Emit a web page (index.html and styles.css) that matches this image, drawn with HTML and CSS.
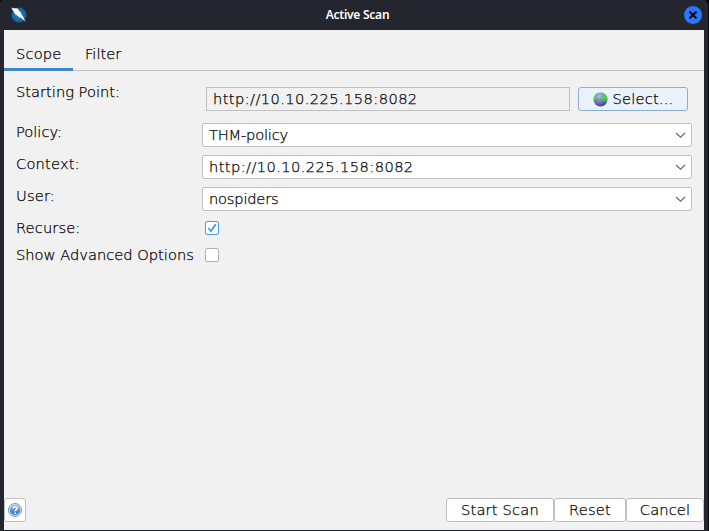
FILE: index.html
```html
<!DOCTYPE html>
<html lang="en">
<head>
<meta charset="utf-8">
<title>Active Scan</title>
<link rel="stylesheet" href="styles.css">
</head>
<body>
<div class="window">
  <header class="titlebar">
    <svg class="app-icon" width="16" height="16" viewBox="0 0 16 16">
      <defs><radialGradient id="zap"><stop offset="0" stop-color="#2f86cf"/><stop offset="1" stop-color="#125a9f"/></radialGradient></defs>
      <circle cx="8" cy="8" r="7.6" fill="url(#zap)"/>
      <path d="M0 .8L6.800 1.200 9 4.500 9.800 4.600 11.200 8.300 12 8.800 14.800 15 9.500 10.800 8.800 11 5.500 8.200 4.700 8.400Z" fill="#fff" stroke="#17212e" stroke-width=".4"/>
    </svg>
    <h1 class="title">Active Scan</h1>
    <svg class="close" width="18" height="18" viewBox="0 0 18 18">
      <circle cx="9" cy="9" r="9" fill="#2777ff"/>
      <path d="M5.500 5.500l7 7m0-7l-7 7" stroke="#0c1018" stroke-width="2.200"/>
    </svg>
  </header>
  <main class="content">
    <nav class="tabs">
      <div class="tab active"><span class="t-wide">Scope</span></div>
      <div class="tab"><span>Filter</span></div>
    </nav>
    <form class="form">
      <div class="row start">
        <label class="label"><span>Starting Point:</span></label>
        <div class="field"><span class="t-url">http://10.10.225.158:8082</span></div>
        <button type="button" class="btn select">
          <svg width="15" height="15" viewBox="0 0 15 15">
            <defs><radialGradient id="sea" cx=".4" cy=".25" r=".8"><stop offset="0" stop-color="#b4b4f2"/><stop offset=".6" stop-color="#7070c8"/><stop offset="1" stop-color="#38387c"/></radialGradient>
            <linearGradient id="land" x2="0" y2="1"><stop offset="0" stop-color="#5cb655"/><stop offset=".5" stop-color="#53d548"/><stop offset="1" stop-color="#36a23d"/></linearGradient></defs>
            <circle cx="7.500" cy="7.500" r="7" fill="url(#sea)"/>
            <path d="M.6 6C1.300 3.500 3 1.500 5.500.8L4.500 3 3 4.500 3 6.200 5.500 7.500 4.500 9 3.800 10.500 1.500 8ZM8 .6C11 .8 14 3.500 14.400 7L13.500 9.500 12 10.500 10.500 7.800 7.500 7.500 6.800 6.200 9.500 4 10 2Z" fill="url(#land)"/>
          </svg>
          <span class="t-wide">Select...</span>
        </button>
      </div>
      <div class="row">
        <label class="label"><span>Policy:</span></label>
        <div class="combo"><span class="t-tight">THM-policy</span><svg width="11" height="7" viewBox="0 0 11 7"><path d="M1 1l4.500 4.200L10 1"/></svg></div>
      </div>
      <div class="row">
        <label class="label"><span class="t-wide">Context:</span></label>
        <div class="combo"><span class="t-url">http://10.10.225.158:8082</span><svg width="11" height="7" viewBox="0 0 11 7"><path d="M1 1l4.500 4.200L10 1"/></svg></div>
      </div>
      <div class="row">
        <label class="label"><span class="t-wide">User:</span></label>
        <div class="combo"><span class="t-tight">nospiders</span><svg width="11" height="7" viewBox="0 0 11 7"><path d="M1 1l4.500 4.200L10 1"/></svg></div>
      </div>
      <div class="row check">
        <label class="label"><span class="t-recurse">Recurse:</span></label>
        <div class="box checked"><svg width="12" height="12" viewBox="0 0 12 12"><path d="M2.300 6L5 9.300l4.800-7.200"/></svg></div>
      </div>
      <div class="row check">
        <label class="label"><span>Show Advanced Options</span></label>
        <div class="box"></div>
      </div>
    </form>
    <footer class="footer">
      <button type="button" class="btn help">
        <svg width="14" height="14" viewBox="0 0 14 14">
          <defs><linearGradient id="hb" x2="0" y2="1"><stop offset="0" stop-color="#8fb4df"/><stop offset="1" stop-color="#356fb1"/></linearGradient></defs>
          <circle cx="7" cy="7" r="6.500" fill="#d3e2f3" stroke="#6e9acb"/>
          <circle cx="7" cy="7" r="5.100" fill="url(#hb)"/>
          <path d="M5 5.500C5 3.200 9 3.200 9 5.400 9 6.800 7.200 6.700 7.200 8.300M7.200 9.400v1.500" fill="none" stroke="#fff" stroke-width="1.600"/>
        </svg>
      </button>
      <button type="button" class="btn scan"><span class="t-wide">Start Scan</span></button>
      <button type="button" class="btn reset"><span class="t-wide">Reset</span></button>
      <button type="button" class="btn cancel"><span class="t-recurse">Cancel</span></button>
    </footer>
  </main>
</div>
</body>
</html>
```
FILE: styles.css
```css
* { box-sizing: border-box; }
body { margin: 0; background: #000; font: 200 14.67px/18px "DejaVu Sans", sans-serif; color: #000; overflow: hidden; }
span { white-space: nowrap; -webkit-text-stroke: .25px #000; }
svg { display: block; flex: none; }
.window { width: 709px; height: 531px; padding: 0 4px 1px; background: #23262f; border-right: 1px solid #07080a; border-radius: 3px 5px 0 0; display: flex; flex-direction: column; }
.titlebar { height: 30px; display: flex; align-items: center; justify-content: space-between; padding: 0 2px 0 7px; flex: none; }
.title { margin: 0; padding-left: 4px; font: 600 12px/16px "Noto Sans", sans-serif; letter-spacing: -.25px; color: #fff; }
.content { flex: 1; background: #f1f1f1; display: flex; flex-direction: column; }
.tabs { height: 41px; display: flex; border-bottom: 1px solid #c0c0c0; flex: none; }
.tab { height: 41px; padding: 15px 12px 0 12px; }
.tab.active { width: 69px; border-bottom: 3px solid #3e85cb; }
.form { padding: 16px 12px 0; display: flex; flex-direction: column; flex: 1; }
.row { display: flex; height: 32px; }
.row.start { height: 36px; }
.row.check { height: 27px; }
.label { width: 186px; flex: none; }
.start .label { width: 190px; margin-top: -4px; }
.field { width: 364px; height: 24px; border: 1px solid #c0c0c0; padding: 2px 6px; margin-right: 8px; }
.combo { width: 490px; height: 24px; background: #fff; border: 1px solid #c0c0c0; border-radius: 2px; display: flex; align-items: center; justify-content: space-between; padding: 0 5px 0 6px; }
.combo path { fill: none; stroke: #686868; stroke-width: 1.1; }
.btn { height: 24px; margin: 0; padding: 0; border: 1px solid #c0c0c0; border-radius: 3px; background: #fff; font: inherit; color: #000; display: flex; align-items: center; justify-content: center; }
.select { width: 110px; border-color: #87afda; background: #eaf2fb; gap: 5px; }
.check .label { width: 189px; }
.box { width: 14px; height: 14px; margin-top: 2px; border: 1px solid #afafaf; border-radius: 2px; background: #fff; }
.box.checked { border-color: #4b9ce6; }
.box path { fill: none; stroke: #4b9ce6; stroke-width: 1.8; }
.footer { height: 32px; display: flex; flex: none; }
.help { width: 22px; margin-right: auto; }
.scan { width: 108px; }
.reset { width: 72px; }
.cancel { width: 78px; }
.t-wide { letter-spacing: .18px; }
.t-recurse { letter-spacing: .1px; }
.t-url { letter-spacing: .41px; }
.t-tight { letter-spacing: -.2px; }
```
